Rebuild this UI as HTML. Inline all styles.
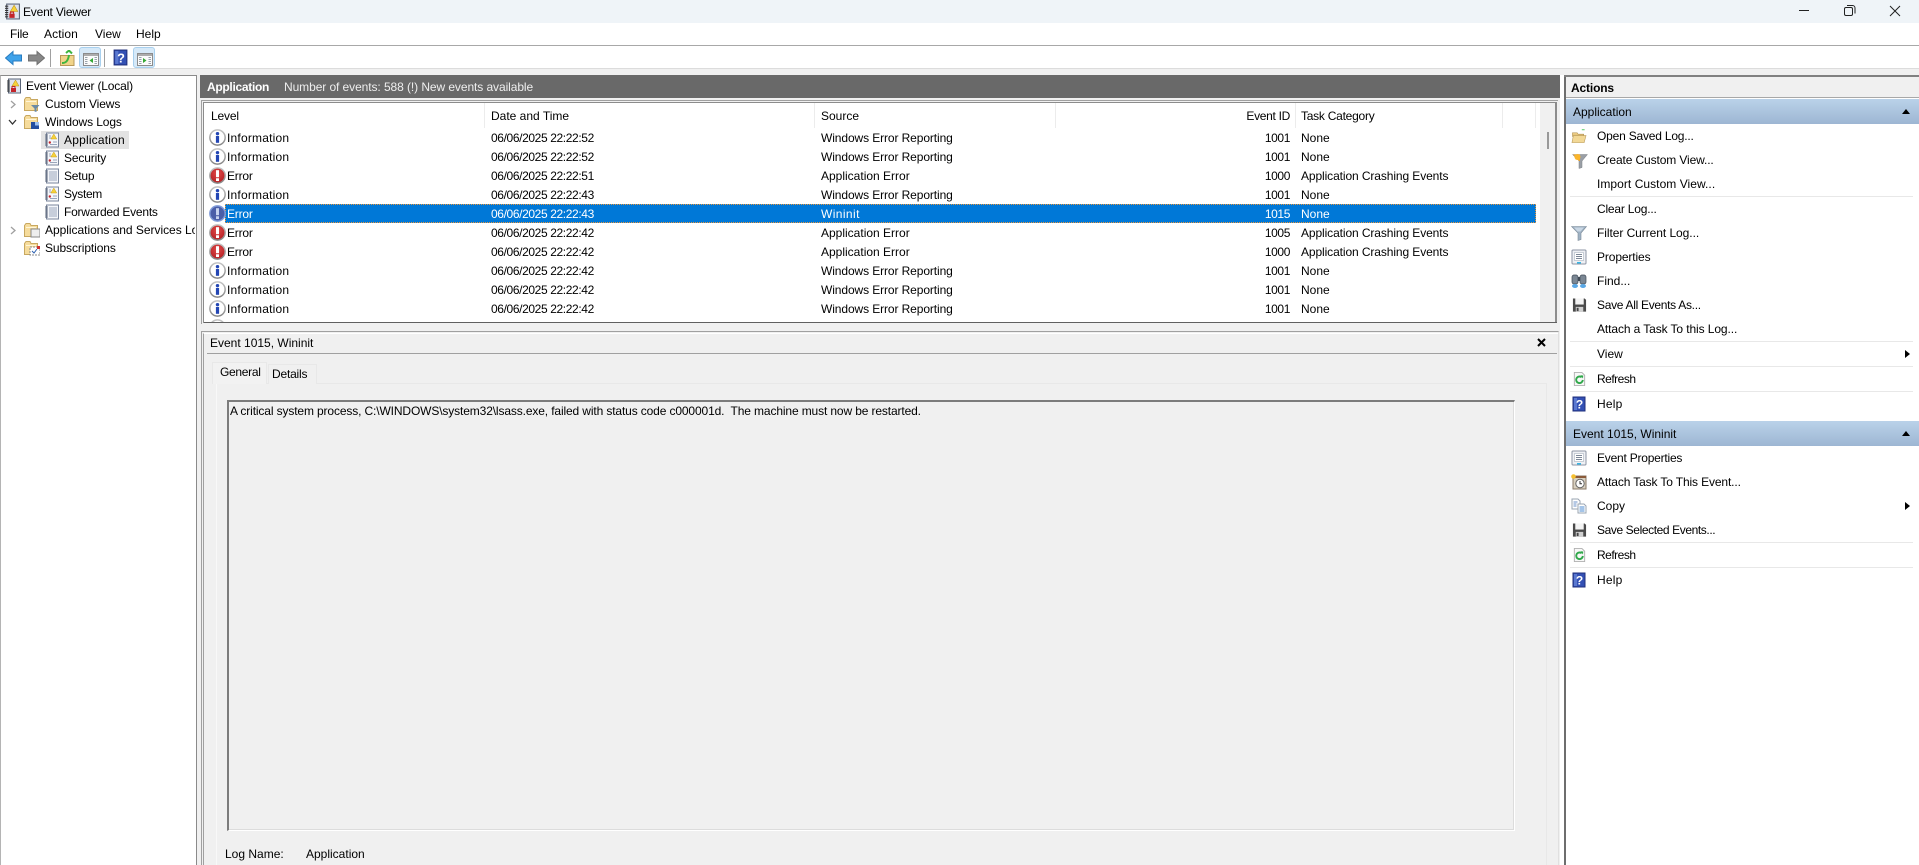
<!DOCTYPE html>
<html><head><meta charset="utf-8"><title>Event Viewer</title>
<style>
html,body{margin:0;padding:0;background:#f0f0f0;overflow:hidden}
body{width:1919px;height:865px;position:relative;font:12px/16px "Liberation Sans",Arial,sans-serif;color:#000}
div,svg{position:absolute}
.t{white-space:nowrap;height:16px}
.d{letter-spacing:-.38px}
.i{letter-spacing:.2px}
.w{letter-spacing:-.1px}
.n{left:1190px;width:100px;text-align:right;letter-spacing:-.38px}
.sep{height:1px;background:#e8e8e8;left:1570px;width:343px}
.secH{left:1566px;width:353px;height:25px;background:linear-gradient(#bad2e9,#9db6d3)}
.tri{width:0;height:0;border-left:4.5px solid transparent;border-right:4.5px solid transparent;border-bottom:5px solid #000}
.ar{width:0;height:0;border-top:4px solid transparent;border-bottom:4px solid transparent;border-left:5px solid #000;left:1905px}
.cs{width:1px;top:103px;height:25px;background:#ececec}
</style></head><body>
<svg width="0" height="0" style="position:absolute">
<defs>
<linearGradient id="ring" x1="0" y1="0" x2="0" y2="1"><stop offset="0" stop-color="#c4c4c4"/><stop offset="1" stop-color="#858585"/></linearGradient>
<radialGradient id="red" cx=".5" cy=".35" r=".7"><stop offset="0" stop-color="#e04a4a"/><stop offset="1" stop-color="#b01c20"/></radialGradient>
<symbol id="info" viewBox="0 0 16 16"><circle cx="8" cy="8" r="7.200" fill="#fff" stroke="url(#ring)" stroke-width="1.400"/><rect x="6.500" y="6.600" width="3" height="6.400" fill="#2346b4"/><circle cx="8" cy="4.400" r="1.600" fill="#2346b4"/></symbol>
<symbol id="err" viewBox="0 0 16 16"><circle cx="8" cy="8" r="7.200" fill="url(#red)" stroke="url(#ring)" stroke-width="1.400"/><rect x="6.600" y="3" width="2.800" height="6.600" fill="#fff"/><rect x="6.600" y="10.600" width="2.800" height="2.600" fill="#fff"/></symbol>
<symbol id="errs" viewBox="0 0 16 16"><circle cx="8" cy="8" r="7.200" fill="#4a5ea8" stroke="#7f9ad8" stroke-width="1.400"/><rect x="6.600" y="3" width="2.800" height="6.600" fill="#c8d4f0"/><rect x="6.600" y="10.600" width="2.800" height="2.600" fill="#c8d4f0"/></symbol>
<symbol id="logw" viewBox="0 0 16 16"><rect x="2.500" y="1" width="12" height="14" fill="#f4f6fa" stroke="#7a869c"/><path d="M1 3h3M1 5h3M1 7h3M1 9h3M1 11h3M1 13h3" stroke="#5a6478"/><path d="M5 4h2M5 6h2M9 10h4M6 12.500h7" stroke="#9aa6bc"/><path d="M9.800 2l3 5H6.800z" fill="#f6d23a" stroke="#c8a020" stroke-width=".5"/><circle cx="5.800" cy="10.500" r="1.200" fill="#c3242a"/></symbol>
<symbol id="ev" viewBox="0 0 16 16"><rect x="2.500" y="1" width="12" height="14" fill="#dfe4ee" stroke="#5a6478"/><path d="M1 3h3M1 5h3M1 7h3M1 9h3M1 11h3M1 13h3" stroke="#333"/><path d="M9.500 2l3.500 6H6z" fill="#f6d23a" stroke="#b8901a" stroke-width=".5"/><rect x="5" y="10" width="5" height="4" fill="#c3242a"/><path d="M6 10V8.500h3V10" fill="none" stroke="#c3242a"/></symbol>
<symbol id="log" viewBox="0 0 16 16"><rect x="2.500" y="1" width="12" height="14" fill="#f4f6fa" stroke="#7a869c"/><path d="M1 3h3M1 5h3M1 7h3M1 9h3M1 11h3M1 13h3" stroke="#5a6478"/><path d="M5 4h8M5 6h8M5 8h8M5 10h8M5 12h8" stroke="#9aa6bc"/></symbol>
<symbol id="folder" viewBox="0 0 16 16"><path d="M.5 3.500V14.500H13.500V3.500H7L6 1.500H2z" fill="#f6dc9c" stroke="#c8a860"/><path d="M2 5h10v1H2z" fill="#fff6d8"/></symbol>
<symbol id="help" viewBox="0 0 16 16"><rect x="2" y="1" width="12" height="14" fill="#3350b4" stroke="#1f2f7c"/><rect x="3" y="2" width="3" height="12" fill="#5a78d0"/><text x="8.500" y="12.500" text-anchor="middle" font-family="Liberation Sans" font-weight="bold" font-size="12" fill="#fff">?</text></symbol>
<symbol id="refresh" viewBox="0 0 16 16"><path d="M2.500 1h8l3 3v11h-11z" fill="#f8f8f8" stroke="#b0b0b0"/><path d="M11.500 9a3.500 3.500 0 1 1-1.200-2.800" fill="none" stroke="#2fa84a" stroke-width="2"/><path d="M9 4l3 .3-.3 3.200z" fill="#2fa84a"/></symbol>
<symbol id="save" viewBox="0 0 16 16"><path d="M1 1h12.500L15 2.500V15H1z" fill="#4a4a4a"/><rect x="3.500" y="1" width="9" height="6.500" fill="#f4f4f4"/><rect x="4" y="10" width="8" height="5" fill="#d0d0d0"/><rect x="5" y="11" width="2" height="3.500" fill="#444"/></symbol>
<symbol id="funnel" viewBox="0 0 16 16"><path d="M.5 1.500h15L10 8v6.500L7 15.500V8z" fill="#9fb2c4" stroke="#7b8a98" stroke-width=".6"/><path d="M3 2.500h10L9.500 6.500h-3z" fill="#c9d7e4"/></symbol>
<symbol id="funnelo" viewBox="0 0 16 16"><path d="M.5 1.500h15L10 8v6.500L7 15.500V8z" fill="#9a9fa6" stroke="#7b8086" stroke-width=".5"/><path d="M1 1.500h7v6.500L7 8z" fill="#f7a823"/><circle cx="5.500" cy="4" r="3" fill="#fbb52a"/></symbol>
<symbol id="prop" viewBox="0 0 16 16"><rect x="1" y="1" width="14" height="14" rx="1" fill="#eef0f4" stroke="#8d96a6"/><rect x="3.500" y="3.500" width="9" height="8" fill="#fff" stroke="#b6bcc8" stroke-width=".7"/><path d="M5 5.500h6M5 7.500h6M5 9.500h6" stroke="#7d8898"/><rect x="6" y="13" width="4" height="1.500" fill="#35b6e6"/></symbol>
<symbol id="find" viewBox="0 0 16 16"><rect x="1" y="2" width="6" height="9" rx="2" fill="#7b8794" stroke="#404a56" stroke-width=".7"/><rect x="9" y="2" width="6" height="9" rx="2" fill="#7b8794" stroke="#404a56" stroke-width=".7"/><rect x="7" y="4" width="2" height="4" fill="#404a56"/><ellipse cx="4" cy="13" rx="3" ry="2" fill="#5aa8e6"/><ellipse cx="12" cy="13" rx="3" ry="2" fill="#5aa8e6"/></symbol>
<symbol id="open" viewBox="0 0 16 16"><path d="M1 4h5l1 1.500h6V8H1z" fill="#e8c880" stroke="#b09050" stroke-width=".6"/><path d="M0.500 14.500l1.500-7.500h13.500l-2 7.500z" fill="#f2d896" stroke="#b89858" stroke-width=".6"/><path d="M11 .8h3" stroke="#4cc85c"/></symbol>
<symbol id="task" viewBox="0 0 16 16"><rect x="2" y="2" width="13" height="13" fill="#d8d0c0" stroke="#8a7a68"/><rect x="2" y="2" width="13" height="2" fill="#8a5a3a"/><circle cx="9" cy="9.500" r="4.200" fill="#fff" stroke="#666"/><path d="M9 7v2.800h2" fill="none" stroke="#333"/><circle cx="2.500" cy="2.500" r="2.300" fill="#f6c030"/></symbol>
<symbol id="copy" viewBox="0 0 16 16"><path d="M1 1h6l2 2v8H1z" fill="#fff" stroke="#9aa4b2"/><path d="M7 6h6l2 2v7H7z" fill="#fff" stroke="#9aa4b2"/><path d="M2.500 4h4M2.500 6h3M2.500 8h3" stroke="#6a90c8"/><path d="M8.500 9h5M8.500 11h5M8.500 13h5" stroke="#4a8ad0"/></symbol>
<symbol id="win" viewBox="0 0 16 13"><rect x=".5" y=".5" width="15" height="12" fill="#fbfbfb" stroke="#8b8b8b"/><path d="M1 2h14" stroke="#8b8b8b" stroke-width="1.400"/><path d="M2 4.500h2.500M2 6.500h2.500M2 8.500h2.500M2 10.500h2.500M11.500 4.500H14M11.500 6.500H14M11.500 8.500H14M11.500 10.500H14" stroke="#9aa4ac"/></symbol>
</defs></svg>

<!-- title bar -->
<div style="left:0;top:0;width:1919px;height:23px;background:#eff4f8"></div>
<svg style="left:4px;top:3px" width="17" height="17"><use href="#ev" width="17" height="17"/></svg>
<div class="t" style="left:23px;top:4px;letter-spacing:-.2px">Event Viewer</div>
<div style="left:1799px;top:10px;width:10px;height:1px;background:#222"></div>
<svg style="left:1844px;top:5px" width="12" height="12" fill="none" stroke="#222"><rect x=".5" y="2.500" width="8" height="8" rx="1.500"/><path d="M3 .5h5.500a2.500 2.500 0 0 1 2.500 2.500v5.500"/></svg>
<svg style="left:1889px;top:5px" width="12" height="12" stroke="#222"><path d="M1 1l10 10M11 1L1 11"/></svg>

<!-- menu -->
<div style="left:0;top:23px;width:1919px;height:22px;background:#fff"></div>
<div style="left:0;top:45px;width:1919px;height:1px;background:#a8a8a8"></div>
<div class="t" style="left:10px;top:26px;letter-spacing:-.2px">File</div>
<div class="t" style="left:44px;top:26px;letter-spacing:.1px">Action</div>
<div class="t" style="left:95px;top:26px">View</div>
<div class="t" style="left:136px;top:26px">Help</div>

<!-- toolbar -->
<div style="left:0;top:46px;width:1919px;height:22px;background:#fff"></div>
<div style="left:0;top:68px;width:1919px;height:1px;background:#dcdcdc"></div>
<svg style="left:5px;top:50px" width="17" height="16"><path d="M.5 8L8 1.500V5h8.500v6H8v3.500z" fill="#3ea2ea" stroke="#2a7cc0"/></svg>
<svg style="left:28px;top:50px" width="17" height="16"><path d="M16.500 8L9 1.500V5H.5v6H9v3.500z" fill="#888" stroke="#707070"/></svg>
<div style="left:50px;top:49px;width:1px;height:18px;background:#a0a0a0"></div>
<svg style="left:60px;top:50px" width="15" height="16"><path d="M.5 5.500h13.500v10H.5z" fill="#f1d48a" stroke="#b89858"/><path d="M2 13c4 0 6-2 7-8M6 3l3-2.500 3 3" fill="none" stroke="#3fb53f" stroke-width="2"/></svg>
<div style="left:79px;top:47px;width:22px;height:21px;box-sizing:border-box;background:#d6e9f8;border:1px solid #a8d0ee;border-radius:3px"></div>
<svg style="left:83px;top:53px" width="16" height="13"><use href="#win" width="16" height="13"/><path d="M10 5v5L6.500 7.500z" fill="#34a834"/></svg>
<div style="left:104px;top:49px;width:1px;height:18px;background:#a0a0a0"></div>
<svg style="left:112px;top:49px" width="17" height="17"><use href="#help" width="17" height="17"/></svg>
<div style="left:133px;top:47px;width:22px;height:21px;box-sizing:border-box;background:#d6e9f8;border:1px solid #a8d0ee;border-radius:3px"></div>
<svg style="left:137px;top:53px" width="16" height="13"><use href="#win" width="16" height="13"/><path d="M6 5v5l3.500-2.500z" fill="#34a834"/></svg>

<!-- left panel -->
<div style="left:0;top:75px;width:197px;height:790px;background:#fff;border-top:1px solid #8a8a8a;border-right:1px solid #8a8a8a;border-left:1px solid #b4b4b4;box-sizing:border-box;overflow:hidden"></div>
<svg style="left:6px;top:78px" width="16" height="16"><use href="#ev" width="16" height="16"/></svg>
<div class="t" style="left:26px;top:78px;letter-spacing:-.18px">Event Viewer (Local)</div>
<svg style="left:9px;top:100px" width="8" height="9" fill="none" stroke="#a0a0a0" stroke-width="1.300"><path d="M2 1l4 3.500L2 8"/></svg>
<svg style="left:24px;top:96px" width="16" height="16"><use href="#folder" width="16" height="16"/><path d="M7 9h8.500l-3 3.500V16l-2-.5v-3z" fill="#6b8aa4"/></svg>
<div class="t" style="left:45px;top:96px;letter-spacing:-.1px">Custom Views</div>
<svg style="left:8px;top:118px" width="9" height="8" fill="none" stroke="#333" stroke-width="1.300"><path d="M1 2l3.500 4L8 2"/></svg>
<svg style="left:24px;top:114px" width="16" height="16"><use href="#folder" width="16" height="16"/><rect x="7" y="8" width="8" height="7" fill="#234ea0"/><rect x="11" y="8" width="4" height="3.500" fill="#9cc0f0"/></svg>
<div class="t" style="left:45px;top:114px;letter-spacing:-.1px">Windows Logs</div>
<div style="left:41px;top:131px;width:88px;height:18px;background:#e3e3e3"></div>
<svg style="left:44px;top:132px" width="16" height="16"><use href="#logw" width="16" height="16"/></svg>
<div class="t" style="left:64px;top:132px;letter-spacing:.2px">Application</div>
<svg style="left:44px;top:150px" width="16" height="16"><use href="#logw" width="16" height="16"/></svg>
<div class="t" style="left:64px;top:150px;letter-spacing:-.15px">Security</div>
<svg style="left:44px;top:168px" width="16" height="16"><use href="#log" width="16" height="16"/></svg>
<div class="t" style="left:64px;top:168px;letter-spacing:-.2px">Setup</div>
<svg style="left:44px;top:186px" width="16" height="16"><use href="#logw" width="16" height="16"/></svg>
<div class="t" style="left:64px;top:186px;letter-spacing:-.35px">System</div>
<svg style="left:44px;top:204px" width="16" height="16"><use href="#log" width="16" height="16"/></svg>
<div class="t" style="left:64px;top:204px;letter-spacing:-.23px">Forwarded Events</div>
<svg style="left:9px;top:226px" width="8" height="9" fill="none" stroke="#a0a0a0" stroke-width="1.300"><path d="M2 1l4 3.500L2 8"/></svg>
<svg style="left:24px;top:222px" width="16" height="16"><use href="#folder" width="16" height="16"/><rect x="7" y="7" width="9" height="8" fill="#eee" stroke="#888"/></svg>
<div class="t" style="left:45px;top:222px;width:150px;overflow:hidden;letter-spacing:-.03px">Applications and Services Logs</div>
<svg style="left:24px;top:240px" width="16" height="16"><use href="#folder" width="16" height="16"/><rect x="6" y="7" width="10" height="8" fill="#fff" stroke="#888" stroke-dasharray="2 1"/><path d="M8 11l2 2 3-4" fill="none" stroke="#2a5fb0"/><rect x="13" y="6" width="3" height="3" fill="#d03030"/></svg>
<div class="t" style="left:45px;top:240px;letter-spacing:-.1px">Subscriptions</div>

<!-- center header -->
<div style="left:200px;top:75px;width:1360px;height:23px;background:#696969"></div>
<div class="t" style="left:207px;top:79px;color:#fff;font-weight:bold;letter-spacing:-.3px">Application</div>
<div class="t" style="left:284px;top:79px;color:#eee;letter-spacing:-.08px">Number of events: 588 (!) New events available</div>

<!-- table -->
<div style="left:201px;top:100px;width:1357px;height:224px;box-sizing:border-box;border-top:1px solid #a0a0a0;border-left:1px solid #a0a0a0;background:#f0f0f0"></div>
<div style="left:203px;top:102px;width:1354px;height:221px;box-sizing:border-box;border-top:1px solid #8c8c8c;border-left:1px solid #8c8c8c;border-right:2px solid #8c8c8c;background:#fff;overflow:hidden"></div>
<div style="left:204px;top:322px;width:1353px;height:1px;background:#606060"></div>
<div style="left:1540px;top:103px;width:15px;height:219px;background:#f0f0f0"></div>
<div style="left:1547px;top:132px;width:2px;height:17px;background:#999"></div>
<div class="cs" style="left:484px"></div><div class="cs" style="left:814px"></div><div class="cs" style="left:1055px"></div><div class="cs" style="left:1295px"></div><div class="cs" style="left:1502px"></div><div class="cs" style="left:1535px"></div>
<div class="t" style="left:211px;top:108px;letter-spacing:-.15px">Level</div>
<div class="t" style="left:491px;top:108px">Date and Time</div>
<div class="t" style="left:821px;top:108px">Source</div>
<div class="t n" style="top:108px;letter-spacing:-.3px">Event ID</div>
<div class="t" style="left:1301px;top:108px;letter-spacing:-.25px">Task Category</div>

<svg style="left:209px;top:129px" width="17" height="17"><use href="#info" width="17" height="17"/></svg>
<div class="t i" style="left:227px;top:130px">Information</div><div class="t d" style="left:491px;top:130px">06/06/2025 22:22:52</div><div class="t w" style="left:821px;top:130px">Windows Error Reporting</div><div class="t n" style="top:130px">1001</div><div class="t" style="left:1301px;top:130px">None</div>

<svg style="left:209px;top:148px" width="17" height="17"><use href="#info" width="17" height="17"/></svg>
<div class="t i" style="left:227px;top:149px">Information</div><div class="t d" style="left:491px;top:149px">06/06/2025 22:22:52</div><div class="t w" style="left:821px;top:149px">Windows Error Reporting</div><div class="t n" style="top:149px">1001</div><div class="t" style="left:1301px;top:149px">None</div>

<svg style="left:209px;top:167px" width="17" height="17"><use href="#err" width="17" height="17"/></svg>
<div class="t" style="left:227px;top:168px;letter-spacing:-.2px">Error</div><div class="t d" style="left:491px;top:168px">06/06/2025 22:22:51</div><div class="t" style="left:821px;top:168px">Application Error</div><div class="t n" style="top:168px">1000</div><div class="t w" style="left:1301px;top:168px">Application Crashing Events</div>

<svg style="left:209px;top:186px" width="17" height="17"><use href="#info" width="17" height="17"/></svg>
<div class="t i" style="left:227px;top:187px">Information</div><div class="t d" style="left:491px;top:187px">06/06/2025 22:22:43</div><div class="t w" style="left:821px;top:187px">Windows Error Reporting</div><div class="t n" style="top:187px">1001</div><div class="t" style="left:1301px;top:187px">None</div>

<div style="left:225px;top:204px;width:1311px;height:19px;box-sizing:border-box;background:#0078d7;border:1px dotted #e8963c"></div>
<svg style="left:209px;top:205px" width="17" height="17"><use href="#errs" width="17" height="17"/></svg>
<div class="t" style="left:227px;top:206px;color:#fff;letter-spacing:-.2px">Error</div><div class="t d" style="left:491px;top:206px;color:#fff">06/06/2025 22:22:43</div><div class="t" style="left:821px;top:206px;color:#fff;letter-spacing:.4px">Wininit</div><div class="t n" style="top:206px;color:#fff">1015</div><div class="t" style="left:1301px;top:206px;color:#fff">None</div>

<svg style="left:209px;top:224px" width="17" height="17"><use href="#err" width="17" height="17"/></svg>
<div class="t" style="left:227px;top:225px;letter-spacing:-.2px">Error</div><div class="t d" style="left:491px;top:225px">06/06/2025 22:22:42</div><div class="t" style="left:821px;top:225px">Application Error</div><div class="t n" style="top:225px">1005</div><div class="t w" style="left:1301px;top:225px">Application Crashing Events</div>

<svg style="left:209px;top:243px" width="17" height="17"><use href="#err" width="17" height="17"/></svg>
<div class="t" style="left:227px;top:244px;letter-spacing:-.2px">Error</div><div class="t d" style="left:491px;top:244px">06/06/2025 22:22:42</div><div class="t" style="left:821px;top:244px">Application Error</div><div class="t n" style="top:244px">1000</div><div class="t w" style="left:1301px;top:244px">Application Crashing Events</div>

<svg style="left:209px;top:262px" width="17" height="17"><use href="#info" width="17" height="17"/></svg>
<div class="t i" style="left:227px;top:263px">Information</div><div class="t d" style="left:491px;top:263px">06/06/2025 22:22:42</div><div class="t w" style="left:821px;top:263px">Windows Error Reporting</div><div class="t n" style="top:263px">1001</div><div class="t" style="left:1301px;top:263px">None</div>

<svg style="left:209px;top:281px" width="17" height="17"><use href="#info" width="17" height="17"/></svg>
<div class="t i" style="left:227px;top:282px">Information</div><div class="t d" style="left:491px;top:282px">06/06/2025 22:22:42</div><div class="t w" style="left:821px;top:282px">Windows Error Reporting</div><div class="t n" style="top:282px">1001</div><div class="t" style="left:1301px;top:282px">None</div>

<svg style="left:209px;top:300px" width="17" height="17"><use href="#info" width="17" height="17"/></svg>
<div class="t i" style="left:227px;top:301px">Information</div><div class="t d" style="left:491px;top:301px">06/06/2025 22:22:42</div><div class="t w" style="left:821px;top:301px">Windows Error Reporting</div><div class="t n" style="top:301px">1001</div><div class="t" style="left:1301px;top:301px">None</div>

<div style="left:209px;top:319px;width:17px;height:3px;overflow:hidden"><svg style="left:0;top:0" width="17" height="17"><use href="#info" width="17" height="17"/></svg></div>

<!-- preview -->
<div style="left:201px;top:331px;width:1358px;height:534px;box-sizing:border-box;border-top:1px solid #a0a0a0;border-left:1px solid #a0a0a0;border-right:1px solid #e0e0e0;background:#f0f0f0"></div>
<div style="left:203px;top:333px;width:1355px;height:532px;box-sizing:border-box;border-left:1px solid #a0a0a0;border-top:1px solid #fff;background:#f0f0f0"></div>
<div class="t" style="left:210px;top:335px">Event 1015, Wininit</div>
<div style="left:207px;top:353px;width:1350px;height:1px;background:#a0a0a0"></div>
<svg style="left:1537px;top:338px" width="9" height="9" stroke="#000" stroke-width="2"><path d="M1 1l7 7M8 1L1 8"/></svg>
<div style="left:216px;top:383px;width:1331px;height:482px;box-sizing:border-box;border-top:1px solid #e8e8e8;border-left:1px solid #f8f8f8;border-right:1px solid #e8e8e8"></div>
<div style="left:212px;top:362px;width:55px;height:22px;box-sizing:border-box;background:#f2f2f2;border:1px solid #e8e8e8;border-bottom:none"></div>
<div style="left:268px;top:364px;width:49px;height:20px;box-sizing:border-box;background:#f0f0f0;border:1px solid #e8e8e8;border-bottom:none"></div>
<div class="t" style="left:220px;top:364px;letter-spacing:-.3px">General</div>
<div class="t" style="left:272px;top:366px;letter-spacing:-.2px">Details</div>
<div style="left:227px;top:400px;width:1288px;height:431px;box-sizing:border-box;border-top:2px solid #7c7c7c;border-left:2px solid #7c7c7c;border-right:1px solid #fff;border-bottom:1px solid #fff;box-shadow:inset -1px -1px 0 #dcdcdc"></div>
<div class="t" style="left:230px;top:403px;letter-spacing:-.13px">A critical system process, C:\WINDOWS\system32\lsass.exe, failed with status code c000001d.&nbsp; The machine must now be restarted.</div>
<div class="t" style="left:225px;top:846px">Log Name:</div>
<div class="t" style="left:306px;top:846px">Application</div>

<!-- actions -->
<div style="left:1560px;top:75px;width:4px;height:790px;background:#fff"></div>
<div style="left:1564px;top:75px;width:355px;height:790px;background:#fff"></div>
<div style="left:1564px;top:75px;width:2px;height:790px;background:#6e6e6e"></div>
<div style="left:1564px;top:75px;width:355px;height:2px;background:#808080"></div>
<div style="left:1566px;top:77px;width:353px;height:20px;background:#f0f0f0"></div>
<div style="left:1566px;top:97px;width:353px;height:1px;background:#a8a8a8"></div>
<div class="t" style="left:1571px;top:80px;font-weight:bold;letter-spacing:-.15px">Actions</div>

<div class="secH" style="top:99px"></div>
<div class="t" style="left:1573px;top:104px">Application</div>
<div class="tri" style="left:1902px;top:109px"></div>

<svg style="left:1571px;top:129px" width="16" height="15"><use href="#open" width="16" height="15"/></svg>
<div class="t" style="left:1597px;top:128px;letter-spacing:-.2px">Open Saved Log...</div>
<svg style="left:1572px;top:153px" width="16" height="16"><use href="#funnelo" width="16" height="16"/></svg>
<div class="t" style="left:1597px;top:152px;letter-spacing:-.12px">Create Custom View...</div>
<div class="t" style="left:1597px;top:176px;letter-spacing:.05px">Import Custom View...</div>
<div class="sep" style="top:196px"></div>
<div class="t" style="left:1597px;top:201px;letter-spacing:-.2px">Clear Log...</div>
<svg style="left:1571px;top:225px" width="16" height="16"><use href="#funnel" width="16" height="16"/></svg>
<div class="t" style="left:1597px;top:225px;letter-spacing:-.06px">Filter Current Log...</div>
<svg style="left:1571px;top:249px" width="16" height="16"><use href="#prop" width="16" height="16"/></svg>
<div class="t" style="left:1597px;top:249px;letter-spacing:-.12px">Properties</div>
<svg style="left:1571px;top:273px" width="16" height="16"><use href="#find" width="16" height="16"/></svg>
<div class="t" style="left:1597px;top:273px">Find...</div>
<svg style="left:1572px;top:297px" width="15" height="16"><use href="#save" width="15" height="16"/></svg>
<div class="t" style="left:1597px;top:297px;letter-spacing:-.3px">Save All Events As...</div>
<div class="t" style="left:1597px;top:321px;letter-spacing:-.1px">Attach a Task To this Log...</div>
<div class="sep" style="top:341px"></div>
<div class="t" style="left:1597px;top:346px">View</div>
<div class="ar" style="top:350px"></div>
<div class="sep" style="top:366px"></div>
<svg style="left:1572px;top:371px" width="15" height="16"><use href="#refresh" width="15" height="16"/></svg>
<div class="t" style="left:1597px;top:371px;letter-spacing:-.5px">Refresh</div>
<div class="sep" style="top:391px"></div>
<svg style="left:1571px;top:396px" width="16" height="16"><use href="#help" width="16" height="16"/></svg>
<div class="t" style="left:1597px;top:396px;letter-spacing:.2px">Help</div>

<div class="secH" style="top:421px"></div>
<div class="t" style="left:1573px;top:426px">Event 1015, Wininit</div>
<div class="tri" style="left:1902px;top:431px"></div>

<svg style="left:1571px;top:450px" width="16" height="16"><use href="#prop" width="16" height="16"/></svg>
<div class="t" style="left:1597px;top:450px;letter-spacing:-.22px">Event Properties</div>
<svg style="left:1571px;top:474px" width="16" height="16"><use href="#task" width="16" height="16"/></svg>
<div class="t" style="left:1597px;top:474px;letter-spacing:-.13px">Attach Task To This Event...</div>
<svg style="left:1571px;top:498px" width="16" height="16"><use href="#copy" width="16" height="16"/></svg>
<div class="t" style="left:1597px;top:498px">Copy</div>
<div class="ar" style="top:502px"></div>
<svg style="left:1572px;top:522px" width="15" height="16"><use href="#save" width="15" height="16"/></svg>
<div class="t" style="left:1597px;top:522px;letter-spacing:-.4px">Save Selected Events...</div>
<div class="sep" style="top:542px"></div>
<svg style="left:1572px;top:547px" width="15" height="16"><use href="#refresh" width="15" height="16"/></svg>
<div class="t" style="left:1597px;top:547px;letter-spacing:-.5px">Refresh</div>
<div class="sep" style="top:567px"></div>
<svg style="left:1571px;top:572px" width="16" height="16"><use href="#help" width="16" height="16"/></svg>
<div class="t" style="left:1597px;top:572px;letter-spacing:.2px">Help</div>
</body></html>
